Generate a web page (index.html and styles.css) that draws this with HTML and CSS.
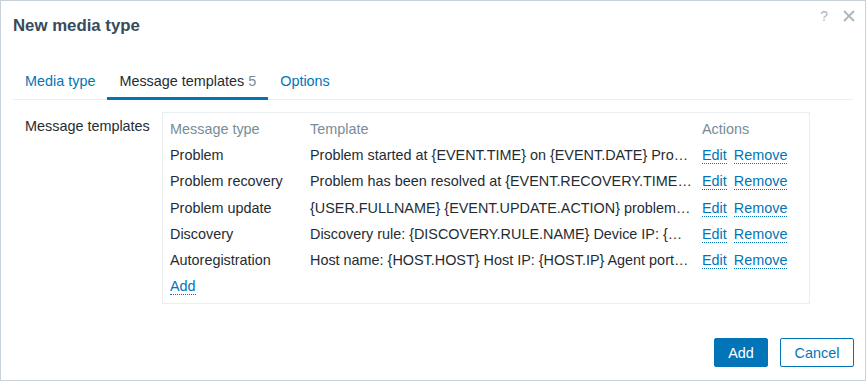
FILE: index.html
```html
<!doctype html>
<html lang="en">
<head>
<meta charset="utf-8">
<title>New media type</title>
<link rel="stylesheet" href="styles.css">
</head>
<body>

	<div class="dialog">

		<div class="dialog-head">
			<h4>New media type</h4>
			<div class="head-tools">
				<span class="help">?</span>
				<svg class="close" width="12" height="12" viewBox="0 0 12 12"><path d="M1 1 L11 11 M11 1 L1 11" stroke="#a9b6be" stroke-width="1.8" fill="none"/></svg>
			</div>
		</div>

		<div class="dialog-body">

			<ul class="tabs">
				<li><a href="#">Media type</a></li>
				<li class="active"><a href="#">Message templates <span class="count">5</span></a></li>
				<li><a href="#">Options</a></li>
			</ul>

			<div class="form-row">
				<label class="form-label">Message templates</label>

				<div class="table-box">
					<table class="templates">
						<colgroup>
							<col class="c-type">
							<col class="c-tpl">
							<col class="c-act">
						</colgroup>
						<thead>
							<tr><th>Message type</th><th>Template</th><th>Actions</th></tr>
						</thead>
						<tbody>
							<tr>
								<td>Problem</td>
								<td class="tpl">Problem started at {EVENT.TIME} on {EVENT.DATE} Problem name: {EVENT.NAME} Host: {HOST.NAME}</td>
								<td><a class="link" href="#">Edit</a><a class="link" href="#">Remove</a></td>
							</tr>
							<tr>
								<td>Problem recovery</td>
								<td class="tpl">Problem has been resolved at {EVENT.RECOVERY.TIME} on {EVENT.RECOVERY.DATE}</td>
								<td><a class="link" href="#">Edit</a><a class="link" href="#">Remove</a></td>
							</tr>
							<tr>
								<td>Problem update</td>
								<td class="tpl">{USER.FULLNAME} {EVENT.UPDATE.ACTION} problem at {EVENT.UPDATE.DATE} {EVENT.UPDATE.TIME}.</td>
								<td><a class="link" href="#">Edit</a><a class="link" href="#">Remove</a></td>
							</tr>
							<tr>
								<td>Discovery</td>
								<td class="tpl">Discovery rule: {DISCOVERY.RULE.NAME} Device IP: {DISCOVERY.DEVICE.IPADDRESS}</td>
								<td><a class="link" href="#">Edit</a><a class="link" href="#">Remove</a></td>
							</tr>
							<tr>
								<td>Autoregistration</td>
								<td class="tpl">Host name: {HOST.HOST} Host IP: {HOST.IP} Agent port: {HOST.PORT}</td>
								<td><a class="link" href="#">Edit</a><a class="link" href="#">Remove</a></td>
							</tr>
							<tr>
								<td colspan="3"><a class="link" href="#">Add</a></td>
							</tr>
						</tbody>
					</table>
				</div>
			</div>

		</div>

		<div class="dialog-foot">
			<button class="btn btn-primary">Add</button>
			<button class="btn btn-alt">Cancel</button>
		</div>

	</div>

</body>
</html>
```

FILE: styles.css
```css
* { box-sizing: border-box; }

html, body { height: 100%; }

body { margin: 0; font: 14.4px "Liberation Sans", Arial, sans-serif; color: #1f2c33; background: #fff; }

a { color: #0275b8; text-decoration: none; }

.dialog { height: 381px; border: 1px solid #c8d2d8; display: flex; flex-direction: column; }

.dialog-head { height: 50px; padding: 0 12px; display: flex; align-items: center; justify-content: space-between; }
.dialog-head h4 { margin: 0; font-size: 16.8px; font-weight: bold; color: #384a5b; }

.head-tools { display: flex; align-items: center; gap: 15px; margin-top: -20px; margin-right: -2px; }
.help { color: #aab7bf; font-size: 14px; }
.close { display: block; }

.dialog-body { flex: 1; padding: 0 12px; }

.tabs { list-style: none; margin: 13px 0 0; padding: 0; display: flex; border-bottom: 1px solid #ebeef0; }
.tabs li { margin-bottom: -1px; border-bottom: 3px solid transparent; }
.tabs li a { display: block; padding: 8px 12px 7px; line-height: 18px; }
.tabs li.active { border-bottom-color: #0275b8; }
.tabs li.active a { color: #1f2c33; }
.count { color: #768d99; }

.form-row { display: grid; grid-template-columns: 137px 648px; column-gap: 12px; margin-top: 12px; }
.form-label { padding: 5px 0 0 12px; line-height: 18px; }

.table-box { border: 1px solid #ebeef0; padding: 3px 0 4px; }

.templates { width: 100%; border-collapse: collapse; table-layout: fixed; }
.c-type { width: 140px; }
.c-tpl { width: 392px; }

.templates th { text-align: left; font-weight: normal; color: #768d99; }
.templates th, .templates td { padding: 0 7px; height: 26.2px; line-height: 18px; white-space: nowrap; }
.templates td.tpl { overflow: hidden; text-overflow: ellipsis; padding-right: 3px; }

.link { border-bottom: 1px dotted #0275b8; margin-right: 7px; }

.dialog-foot { display: flex; justify-content: flex-end; gap: 12px; padding: 0 11px 13px; }

.btn { font: 14.4px "Liberation Sans", Arial, sans-serif; height: 29px; padding: 0 10px; border-radius: 2px; border: 1px solid #0275b8; cursor: pointer; }
.btn-primary { background: #0275b8; color: #fff; width: 54px; }
.btn-alt { background: #fff; color: #0275b8; width: 74px; }
```
